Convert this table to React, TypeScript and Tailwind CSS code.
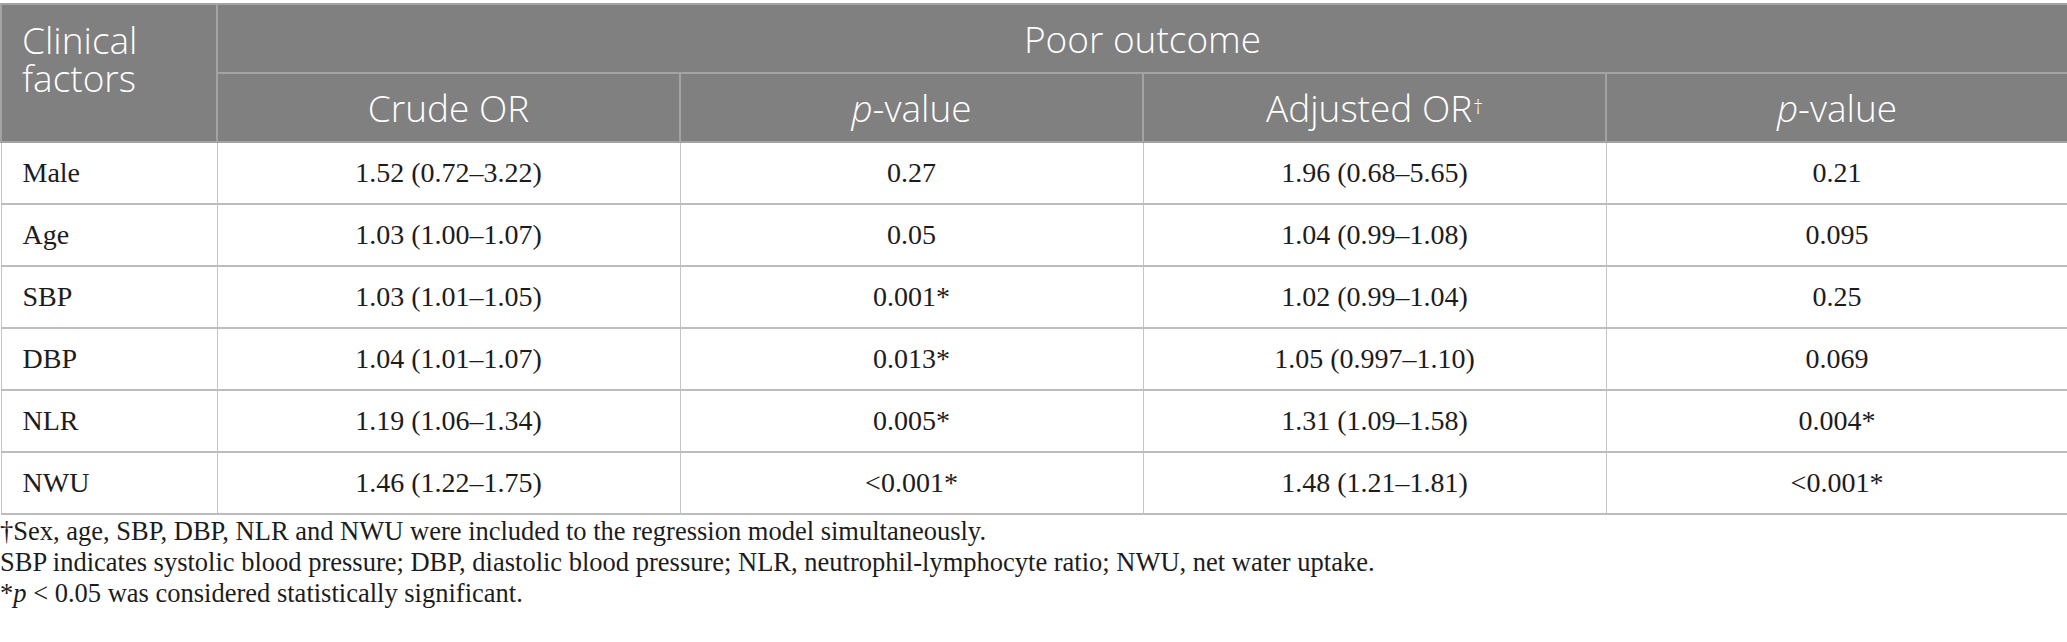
import React from "react"

type Row = { factor: string; crude: string; p1: string; adj: string; p2: string }

const rows: Row[] = [
  { factor: "Male", crude: "1.52 (0.72–3.22)", p1: "0.27", adj: "1.96 (0.68–5.65)", p2: "0.21" },
  { factor: "Age", crude: "1.03 (1.00–1.07)", p1: "0.05", adj: "1.04 (0.99–1.08)", p2: "0.095" },
  { factor: "SBP", crude: "1.03 (1.01–1.05)", p1: "0.001*", adj: "1.02 (0.99–1.04)", p2: "0.25" },
  { factor: "DBP", crude: "1.04 (1.01–1.07)", p1: "0.013*", adj: "1.05 (0.997–1.10)", p2: "0.069" },
  { factor: "NLR", crude: "1.19 (1.06–1.34)", p1: "0.005*", adj: "1.31 (1.09–1.58)", p2: "0.004*" },
  { factor: "NWU", crude: "1.46 (1.22–1.75)", p1: "<0.001*", adj: "1.48 (1.21–1.81)", p2: "<0.001*" },
]

const head = "font-['Open_Sans',sans-serif] font-light text-white text-[37px] leading-none"
const th = "border-2 border-[#a3a3a3] bg-[#808080] font-light"
const td = "border-x border-[#c4c4c4] border-y-2 border-y-[#bdbdbd] h-[62px] p-0 text-center align-middle"

export default function App() {
  return (
    <div className="bg-white w-[2067px] h-[642px] pt-[3px] text-[#1c1c1c] font-['Liberation_Serif',serif]">
      <table className="w-[2067px] table-fixed border-collapse">
        <colgroup>
          <col className="w-[216px]" />
          <col className="w-[463px]" />
          <col className="w-[463px]" />
          <col className="w-[463px]" />
          <col className="w-[462px]" />
        </colgroup>
        <thead className={head}>
          <tr className="h-[69px]">
            <th rowSpan={2} className={`${th} text-left align-top pl-[20px] pt-[16px]`}>
              <span className="block h-[38px]">Clinical</span>
              <span className="block">factors</span>
            </th>
            <th colSpan={4} className={`${th} text-center`}>
              Poor outcome
            </th>
          </tr>
          <tr className="h-[69px]">
            <th className={th}>Crude OR</th>
            <th className={th}>
              <span className="italic">p</span>-value
            </th>
            <th className={th}>
              Adjusted OR<sup className="text-[20px] relative -top-[8px] ml-[1px]">†</sup>
            </th>
            <th className={th}>
              <span className="italic">p</span>-value
            </th>
          </tr>
        </thead>
        <tbody className="text-[28px] leading-none">
          {rows.map((r) => (
            <tr key={r.factor}>
              <td className={`${td} !text-left pl-[21px]`}>{r.factor}</td>
              <td className={td}>{r.crude}</td>
              <td className={td}>{r.p1}</td>
              <td className={td}>{r.adj}</td>
              <td className={td}>{r.p2}</td>
            </tr>
          ))}
        </tbody>
      </table>
      <div className="mt-[1px] text-[26.5px] leading-[31px]">
        <p>†Sex, age, SBP, DBP, NLR and NWU were included to the regression model simultaneously.</p>
        <p>
          SBP indicates systolic blood pressure; DBP, diastolic blood pressure; NLR, neutrophil-lymphocyte ratio; NWU,
          net water uptake.
        </p>
        <p>
          *<span className="italic">p</span> &lt; 0.05 was considered statistically significant.
        </p>
      </div>
    </div>
  )
}
